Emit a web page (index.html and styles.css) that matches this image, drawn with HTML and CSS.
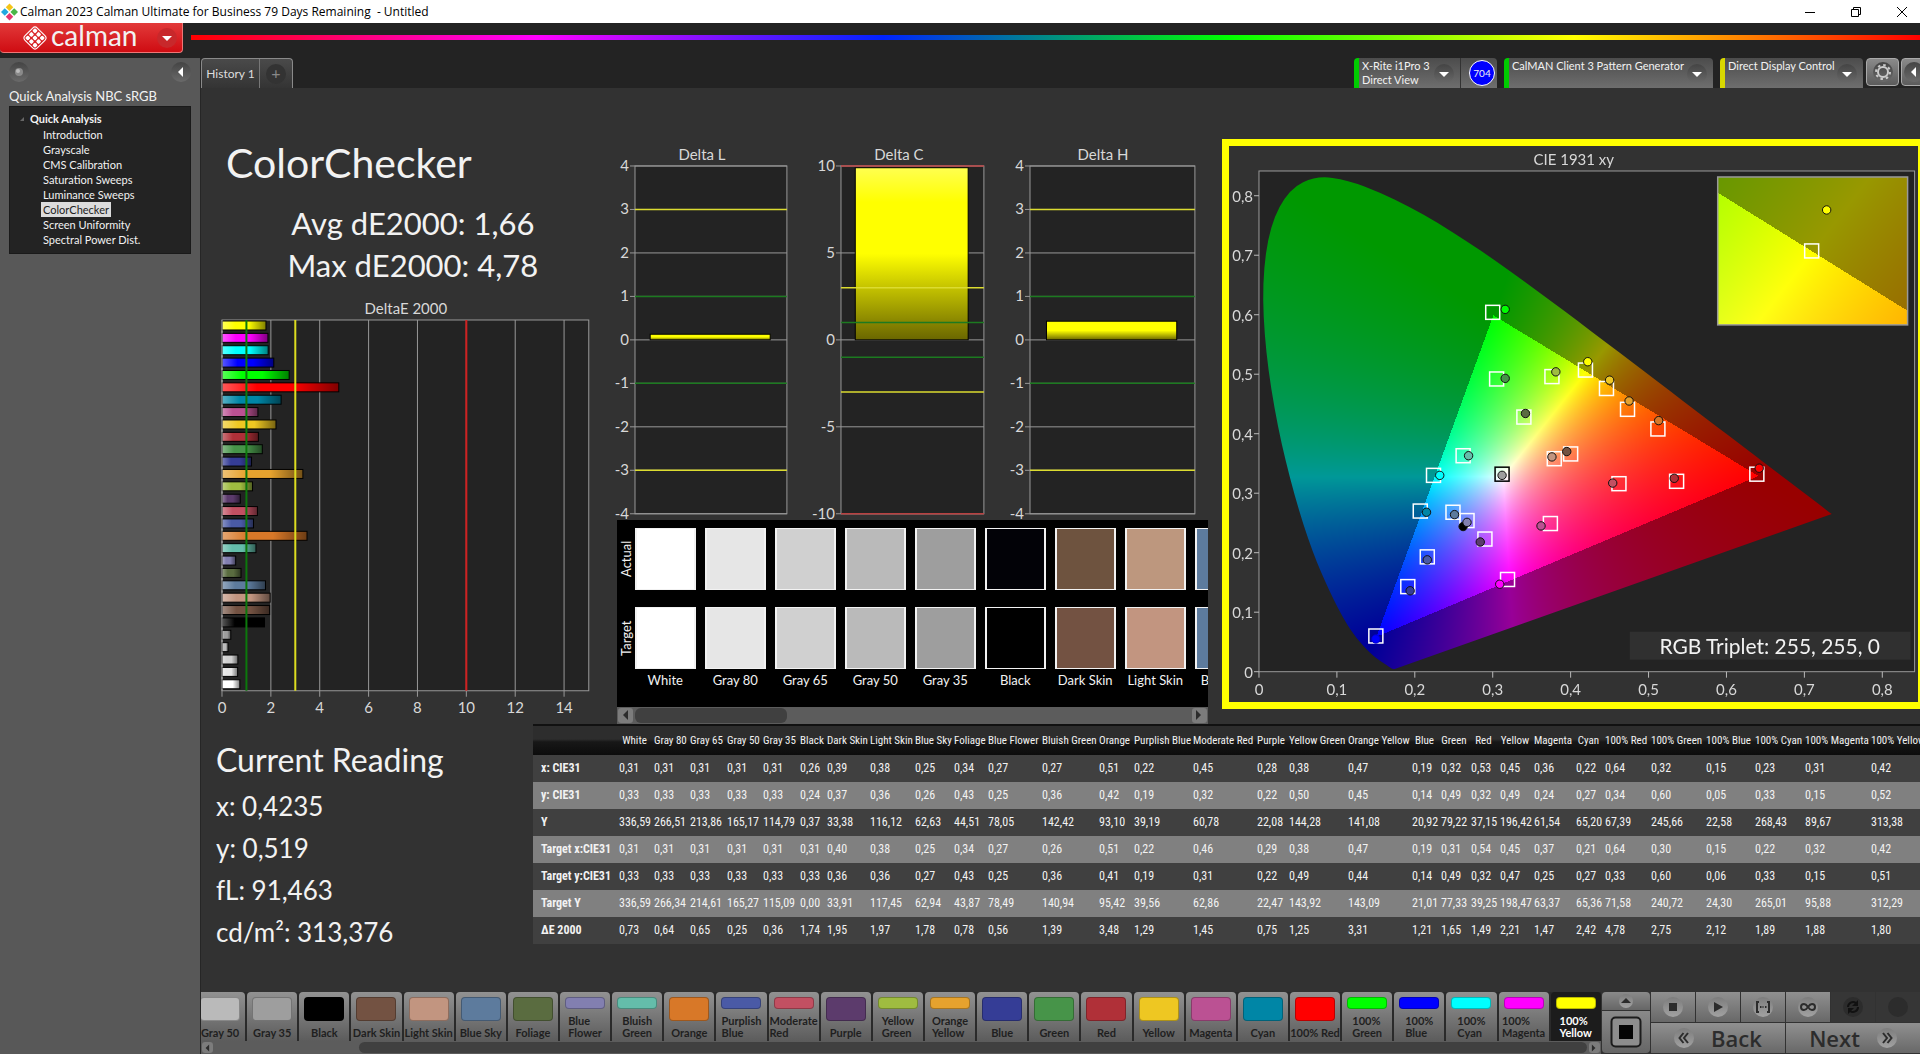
FILE: index.html
```html
<!DOCTYPE html>
<html lang="en">
<head>
<meta charset="utf-8">
<title>Calman 2023 Calman Ultimate for Business 79 Days Remaining - Untitled</title>
<link rel="stylesheet" href="styles.css">
</head>
<body>
<header class="titlebar">
  <svg class="app-icon" viewBox="0 0 18 18" aria-hidden="true">
    <path d="M9 0l4 4-4 4-4-4z" fill="#f5c518"/><path d="M14 5l4 4-4 4-4-4z" fill="#4bb648"/><path d="M9 10l4 4-4 4-4-4z" fill="#e5356f"/><path d="M4 5l4 4-4 4-4-4z" fill="#22a8e0"/>
  </svg>
  <span class="titlebar-text">Calman 2023 Calman Ultimate for Business 79 Days Remaining&nbsp; - Untitled</span>
  <div class="window-controls">
    <button type="button" aria-label="Minimize"><svg viewBox="0 0 12 12"><path d="M1 6.5h10"/></svg></button>
    <button type="button" aria-label="Restore"><svg viewBox="0 0 12 12"><path d="M1.500 3.500h7v7h-7zM3.500 3.500v-2h7v7h-2"/></svg></button>
    <button type="button" aria-label="Close"><svg viewBox="0 0 12 12"><path d="M1 1l10 10M11 1L1 11"/></svg></button>
  </div>
</header>

<div class="brandbar">
  <button type="button" class="brand">
    <svg class="brand-mark" viewBox="0 0 24 24" aria-hidden="true">
      <g transform="rotate(45 12 12)">
        <rect x="4" y="4" width="16" height="16" rx="3" fill="none" stroke="#fff"/>
        <g fill="#fff"><rect x="5.500" y="5.500" width="3.600" height="3.600" rx="1"/><rect x="10.200" y="5.500" width="3.600" height="3.600" rx="1"/><rect x="14.900" y="5.500" width="3.600" height="3.600" rx="1"/><rect x="5.500" y="10.200" width="3.600" height="3.600" rx="1"/><rect x="10.200" y="10.200" width="3.600" height="3.600" rx="1"/><rect x="14.900" y="10.200" width="3.600" height="3.600" rx="1"/><rect x="5.500" y="14.900" width="3.600" height="3.600" rx="1"/><rect x="10.200" y="14.900" width="3.600" height="3.600" rx="1"/><rect x="14.900" y="14.900" width="3.600" height="3.600" rx="1"/></g>
      </g>
    </svg>
    <span class="brand-name">calman</span>
    <span class="brand-arrow"><svg viewBox="0 0 20 20"><path d="M5 8h10l-5 5z"/></svg></span>
  </button>
  <div class="spectrum"></div>
</div>

<div class="workspace">
  <aside class="sidebar">
    <div class="sidebar-tools">
      <button type="button" class="round" aria-label="Pin"><svg viewBox="0 0 20 20"><circle cx="10" cy="10" r="4" fill="#8a8a8a"/><circle cx="9" cy="9" r="2" fill="#bbb"/></svg></button>
      <button type="button" class="round" aria-label="Collapse"><svg viewBox="0 0 20 20"><path d="M12 5v10l-5-5z"/></svg></button>
    </div>
    <h2 class="sidebar-title">Quick Analysis NBC sRGB</h2>
    <nav class="tree">
      <p class="tree-root"><svg viewBox="0 0 8 8" aria-hidden="true"><path d="M6 2v4H2z" fill="#666"/></svg>Quick Analysis</p>
      <ul>
        <li><a href="#">Introduction</a></li>
        <li><a href="#">Grayscale</a></li>
        <li><a href="#">CMS Calibration</a></li>
        <li><a href="#">Saturation Sweeps</a></li>
        <li><a href="#">Luminance Sweeps</a></li>
        <li><a href="#" class="current">ColorChecker</a></li>
        <li><a href="#">Screen Uniformity</a></li>
        <li><a href="#">Spectral Power Dist.</a></li>
      </ul>
    </nav>
  </aside>

  <main class="main">
    <div class="tabbar">
      <div class="history">
        <button type="button" class="history-tab">History 1</button>
        <button type="button" class="history-add" aria-label="Add history"><span>+</span></button>
      </div>
      <div class="devices">
        <div class="device device-meter">
          <button type="button" class="device-main"><span>X-Rite i1Pro 3<br>Direct View</span><span class="round"><svg viewBox="0 0 20 20"><path d="M5 8h10l-5 5z"/></svg></span></button>
          <span class="badge">704</span>
        </div>
        <div class="device device-source">
          <button type="button" class="device-main"><span>CalMAN Client 3 Pattern Generator</span><span class="round"><svg viewBox="0 0 20 20"><path d="M5 8h10l-5 5z"/></svg></span></button>
        </div>
        <div class="device device-display">
          <button type="button" class="device-main"><span>Direct Display Control</span><span class="round"><svg viewBox="0 0 20 20"><path d="M5 8h10l-5 5z"/></svg></span></button>
        </div>
        <div class="device-tools">
          <button type="button" class="tool" aria-label="Settings"><span class="round"><svg viewBox="0 0 20 20"><circle cx="10" cy="10" r="5" fill="none" stroke="#ccc" stroke-width="2"/><circle cx="10" cy="10" r="7" fill="none" stroke="#ccc" stroke-width="2" stroke-dasharray="2.500 3"/></svg></span></button>
          <button type="button" class="tool" aria-label="Hide devices"><span class="round"><svg viewBox="0 0 20 20"><path d="M12 5v10l-5-5z"/></svg></span></button>
        </div>
      </div>
    </div>

    <div class="charts">
      <section class="summary">
        <h1>ColorChecker</h1>
        <p class="stat">Avg dE2000: 1,66</p>
        <p class="stat">Max dE2000: 4,78</p>
        <svg id="delta-e" class="chart" viewBox="0 0 410 425"></svg>
      </section>

      <section class="middle">
        <div class="deltas">
          <svg id="delta-l" class="chart" viewBox="0 0 190 384"></svg>
          <svg id="delta-c" class="chart" viewBox="0 0 200 384"></svg>
          <svg id="delta-h" class="chart" viewBox="0 0 210 384"></svg>
        </div>
        <div class="compare">
          <div class="compare-side"><span>Actual</span><span>Target</span></div>
          <div class="compare-list" id="compare"></div>
        </div>
        <div class="scrollbar">
          <button type="button" aria-label="Scroll left"><svg viewBox="0 0 14 14"><path d="M10 2v10L5 7z"/></svg></button>
          <div class="track"><div class="thumb thumb-short"></div></div>
          <button type="button" aria-label="Scroll right"><svg viewBox="0 0 14 14"><path d="M4 2v10l5-5z"/></svg></button>
        </div>
      </section>

      <section class="cie">
        <div class="cie-panel">
          <canvas id="gamut" width="689" height="556"></canvas>
          <svg id="cie" class="chart" viewBox="0 0 689 556"></svg>
        </div>
      </section>
    </div>

    <div class="readings">
      <section class="current-reading">
        <h2>Current Reading</h2>
        <p>x: 0,4235</p>
        <p>y: 0,519</p>
        <p>fL: 91,463</p>
        <p>cd/m²: 313,376</p>
      </section>
      <div class="table-wrap"><table class="data" id="data"></table></div>
    </div>

    <footer class="bottombar">
      <div class="strip">
        <div class="patches" id="patches"></div>
        <div class="scrollbar scrollbar-small">
          <button type="button" aria-label="Scroll left"><svg viewBox="0 0 14 14"><path d="M10 2v10L5 7z"/></svg></button>
          <div class="track"><div class="thumb thumb-long"></div></div>
          <button type="button" aria-label="Scroll right"><svg viewBox="0 0 14 14"><path d="M4 2v10l5-5z"/></svg></button>
        </div>
      </div>
      <div class="window-toggle">
        <button type="button" class="up" aria-label="Expand"><span class="disc"><svg viewBox="0 0 14 14"><path d="M2 9h10L7 4z"/></svg></span></button>
        <button type="button" class="pattern" aria-label="Pattern window"><svg viewBox="0 0 32 32"><rect x="1.500" y="1.500" width="29" height="29" rx="4" fill="#8d8d8d" stroke="#1c1c1c" stroke-width="2"/><path d="M9 9h14v14H9z" fill="#050505"/></svg></button>
      </div>
      <div class="transport">
        <div class="transport-row">
          <button type="button" aria-label="Stop"><span class="disc"><svg viewBox="0 0 20 20"><path d="M6 6h8v8H6z"/></svg></span></button>
          <button type="button" aria-label="Read"><span class="disc"><svg viewBox="0 0 20 20"><path d="M6 5l9 5-9 5z"/></svg></span></button>
          <button type="button" aria-label="Read series"><span class="disc"><svg viewBox="0 0 20 20"><path d="M6 5H4v10h2M14 5h2v10h-2M7 10h1.500M9.500 10h1M12 10h1.500" fill="none" stroke="#2c2c2c" stroke-width="2"/></svg></span></button>
          <button type="button" aria-label="Read continuous"><span class="disc"><svg viewBox="0 0 20 20"><path d="M10 10c-2-3-3-3-4-3a3 3 0 0 0 0 6c1 0 2 0 4-3s3-3 4-3a3 3 0 0 1 0 6c-1 0-2 0-4-3z" fill="none" stroke="#2c2c2c" stroke-width="2"/></svg></span></button>
          <button type="button" class="off" aria-label="Refresh"><span class="disc"><svg viewBox="0 0 20 20"><path d="M5 10a5 5 0 0 1 8-4M15 10a5 5 0 0 1-8 4" fill="none" stroke="#111" stroke-width="2"/><path d="M15 3v6H9zM5 17v-6h6z" fill="#111"/></svg></span></button>
          <button type="button" class="off" aria-label="Record"><span class="disc"></span></button>
        </div>
        <div class="transport-nav">
          <button type="button"><span class="disc"><svg viewBox="0 0 20 20"><path d="M9.500 5l-4 5 4 5M14 5l-4 5 4 5" fill="none" stroke="#2c2c2c" stroke-width="2"/></svg></span>Back</button>
          <button type="button">Next<span class="disc"><svg viewBox="0 0 20 20"><path d="M6 5l4 5-4 5M10.500 5l4 5-4 5" fill="none" stroke="#2c2c2c" stroke-width="2"/></svg></span></button>
        </div>
      </div>
    </footer>
  </main>
</div>
<script src="app.js"></script>
</body>
</html>
```
FILE: styles.css
```css
* { box-sizing: border-box; }
body {
  margin: 0;
  min-height: 100vh;
  display: flex;
  flex-direction: column;
  background: #323232;
  color: #f2f2f2;
  font-family: Lato, "Liberation Sans", sans-serif;
  overflow-x: hidden;
}
h1, h2, p, ul { margin: 0; padding: 0; font-weight: 400; }
button { border: 0; padding: 0; background: none; color: inherit; font: inherit; }
svg { display: block; }

/* Window title */
.titlebar {
  display: flex;
  align-items: center;
  height: 23px;
  padding-left: 1px;
  background: #fff;
  color: #000;
  font: 12px "Open Sans", sans-serif;
}
.app-icon { width: 17px; height: 18px; margin-right: 2px; }
.titlebar-text { flex: 1; }
.window-controls { display: flex; margin-right: -5px; }
.window-controls button { width: 46px; display: grid; place-items: center; }
.window-controls svg { width: 12px; height: 12px; fill: none; stroke: #000; }

/* Brand row */
.brandbar {
  display: flex;
  gap: 8px;
  height: 35px;
  background: #232323;
}
.brand {
  display: flex;
  align-items: center;
  width: 183px;
  height: 30px;
  padding: 0 5px 0 22px;
  border: 1px solid #e77;
  border-top: 0;
  border-left: 0;
  border-radius: 0 0 4px 4px;
  background: linear-gradient(#e23a3a, #cf0c12);
}
.brand-mark { width: 26px; height: 26px; margin-right: 3px; }
.brand-name { flex: 1; font-size: 28px; line-height: 28px; text-align: left; padding-bottom: 6px; }
.brand-arrow { width: 20px; height: 20px; border-radius: 50%; background: #c8282b; }
.brand-arrow svg, .round svg { width: 20px; height: 20px; fill: #fff; }
.spectrum {
  flex: 1;
  height: 5px;
  margin-top: 12px;
  background: linear-gradient(90deg, #f00, #f0f 20%, #02f 40%, #0f0 60%, #ff0 80%, #f00);
}

/* Sidebar */
.workspace { flex: 1; display: flex; }
.sidebar {
  width: 201px;
  padding: 4px 9px;
  background: #585858;
  border-right: 1px solid #262626;
}
.sidebar-tools { display: flex; justify-content: space-between; }
.round {
  flex: none;
  width: 20px;
  height: 20px;
  border-radius: 50%;
  background: linear-gradient(#444, #6a6a6a);
}
.sidebar-title { margin-top: 5px; font-size: 13px; line-height: 19px; }
.tree {
  height: 148px;
  padding-top: 3px;
  background: #232323;
  border: 1px solid #1a1a1a;
  font-size: 11px;
  line-height: 15px;
}
.tree-root { display: flex; align-items: center; gap: 4px; height: 17px; padding-left: 8px; font-weight: 700; }
.tree-root svg { width: 8px; height: 8px; }
.tree ul { list-style: none; padding-left: 31px; }
.tree a { display: inline-block; padding: 0 2px; color: #f2f2f2; text-decoration: none; }
.tree .current { background: #dcdcdc; color: #222; }

/* Tabs and devices */
.main { flex: 1; min-width: 0; display: flex; flex-direction: column; overflow: hidden; }
.tabbar { display: flex; justify-content: space-between; height: 30px; background: #232323; }
.history {
  display: flex;
  border: 1px solid #8a8a8a;
  border-bottom: 0;
  border-radius: 4px 4px 0 0;
  background: linear-gradient(#4a4a4a, #343434);
}
.history-tab { width: 58px; font-size: 12px; color: #ddd; border-right: 1px solid #777; }
.history-add { width: 32px; display: grid; place-items: center; color: #888; }
.history-add span { width: 20px; height: 20px; line-height: 18px; border-radius: 50%; background: #333; }
.devices { display: flex; gap: 7px; margin-right: -7px; }
.device {
  display: flex;
  align-items: center;
  border-left: 5px solid #0c0;
  border-radius: 4px 4px 0 0;
  background: linear-gradient(#4c4c4c, #6e6e6e);
}
.device-main {
  flex: 1;
  display: flex;
  justify-content: space-between;
  align-items: flex-start;
  height: 30px;
  padding: 1px 6px 0 3px;
  font-size: 11px;
  line-height: 14px;
  text-align: left;
  white-space: nowrap;
}
.device-main .round { margin-top: 5px; }
.device-meter { width: 143px; }
.device-source { width: 209px; }
.device-display { width: 143px; border-left-color: #d8d800; }
.device-meter .device-main { border-right: 1px solid #333; }
.badge {
  width: 26px;
  height: 26px;
  margin: 0 2px 0 8px;
  border: 1px solid #fff;
  border-radius: 50%;
  background: #00f;
  font-size: 10px;
  line-height: 24px;
  text-align: center;
}
.device-tools { display: flex; gap: 2px; margin-left: -4px; }
.tool {
  display: grid;
  place-items: center;
  width: 33px;
  height: 28px;
  border: 1px solid #aaa;
  border-radius: 4px;
  background: linear-gradient(#8a8a8a, #5c5c5c);
}
.tool + .tool { width: 26px; }

/* Charts */
.charts { display: grid; grid-template-columns: minmax(0, 410fr) minmax(0, 600fr) minmax(0, 710fr); }
.chart { width: 100%; height: auto; overflow: visible; font-family: Lato, sans-serif; }
.chart text { fill: #d8d8d8; font-size: 15px; }
.chart .triplet { fill: #f2f2f2; font-size: 21px; }
.summary { padding-top: 45px; }
.summary h1 { padding-left: 25px; font-size: 41px; line-height: 60px; }
.stat { padding-left: 14px; font-size: 31px; line-height: 42px; text-align: center; white-space: nowrap; }
.summary h1 + .stat { margin-top: 9px; }
.summary .chart { margin-top: 10px; }
.middle { padding-top: 48px; }
.deltas { display: grid; grid-template-columns: minmax(0, 190fr) minmax(0, 200fr) minmax(0, 210fr); }
.compare {
  display: flex;
  height: 187px;
  margin: 0 2px 0 6px;
  padding-top: 8px;
  background: #000;
  overflow: hidden;
}
.compare-side { flex: none; width: 18px; display: flex; flex-direction: column; gap: 17px; font-size: 13px; }
.compare-side span { height: 62px; line-height: 18px; writing-mode: vertical-rl; transform: rotate(180deg); text-align: center; }
.compare-list { display: flex; gap: 9px; flex: 1; min-width: 0; overflow: hidden; }
.compare-item { flex: none; width: 61px; font-size: 13px; line-height: 20px; text-align: center; white-space: nowrap; }
.compare-item div { height: 62px; margin-bottom: 17px; border: 2px solid #f2f2f2; border-width: 1px 2px; }
.compare-item div + div { margin-bottom: 1px; }
.scrollbar { display: flex; height: 17px; margin: 0 2px 0 6px; padding: 1px; background: #5c5c5c; }
.scrollbar button { width: 15px; border-radius: 3px; background: #7c7c7c; }
.scrollbar svg { width: 14px; height: 14px; fill: #2c2c2c; }
.track { flex: 1; padding: 0 2px; }
.thumb { height: 100%; border-radius: 6px; background: #404040; }
.thumb-short { width: 152px; }
.thumb-long { margin-left: 144px; }
.scrollbar-small { height: 13px; margin: 0; }
.scrollbar-small button { width: 11px; }
.scrollbar-small svg { width: 10px; height: 10px; }

.cie { padding: 51px 0 0 12px; }
.cie-panel { display: grid; border: 7px solid #ff0; border-right-width: 2px; }
.cie-panel > * { grid-area: 1 / 1; width: 100%; height: auto; }

/* Readings */
.readings { display: flex; }
.current-reading { flex: none; width: 332px; padding: 13px 0 0 15px; font-size: 26px; line-height: 42px; }
.current-reading h2 { font-size: 32px; line-height: 46px; margin-bottom: 2px; }
.table-wrap { flex: 1; min-width: 0; overflow: hidden; border-top: 2px solid #111; }
.data {
  table-layout: fixed;
  width: 1400px;
  border-collapse: collapse;
  font-family: "Roboto Condensed", "Liberation Sans", sans-serif;
  font-size: 12px;
  white-space: nowrap;
}
.data th, .data td { padding: 0; text-align: left; font-weight: 400; }
.data thead tr { height: 29px; background: linear-gradient(#2d2d2d 45%, #171717 55%, #0c0c0c); }
.data thead th { padding-right: 4px; text-align: center; font-size: 11px; }
.data tbody tr { height: 27px; background: #404040; }
.data tbody tr:nth-child(even) { background: #808080; }
.data tbody th { padding-left: 8px; font-weight: 700; }

/* Bottom bar */
.bottombar { display: flex; height: 62px; margin-top: auto; }
.strip { flex: 1; min-width: 0; overflow: hidden; }
.patches { display: flex; gap: 2px; margin-left: -6px; height: 49px; background: #2a2a2a; }
.patch {
  flex: 1 1 0;
  min-width: 0;
  display: flex;
  flex-direction: column;
  align-items: center;
  justify-content: space-between;
  padding: 5px 0 2px;
  border-radius: 4px 4px 0 0;
  background: linear-gradient(#929292, #5c5c5c);
  color: #1f1f1f;
  font-size: 11px;
  font-weight: 700;
  line-height: 12px;
  text-align: left;
  white-space: nowrap;
}
.patch i { width: 40px; height: 24px; border: 1px solid #0004; border-radius: 4px; }
.patch .half { height: 12px; }
.patch.selected { background: #1c1c1c; color: #fff; }
.window-toggle { width: 48px; margin: 0 1px; display: flex; flex-direction: column; gap: 1px; }
.window-toggle button { display: grid; place-items: center; background: linear-gradient(#8a8a8a, #666); border-radius: 4px 4px 0 0; }
.window-toggle .up { height: 18px; }
.window-toggle .pattern { height: 42px; border-radius: 0 0 4px 4px; }
.pattern svg { width: 32px; height: 32px; }
.disc { display: block; width: 20px; height: 20px; border-radius: 50%; background: linear-gradient(#7c7c7c, #a2a2a2); }
.disc svg { width: 20px; height: 20px; fill: #2c2c2c; }
.up .disc { width: 14px; height: 14px; }
.up .disc svg { width: 14px; height: 14px; }
.transport { width: 269px; display: grid; grid-template-rows: 30px 30px; gap: 1px; }
.transport-row { display: grid; grid-template-columns: repeat(6, 1fr); gap: 1px; }
.transport-row button, .transport-nav button { background: linear-gradient(#909090, #686868); }
.transport-row button { display: grid; place-items: center; }
.transport-row .off { background: #363636; }
.off .disc { background: #2c2c2c; }
.transport-nav { display: grid; grid-template-columns: 1fr 1fr; gap: 1px; }
.transport-nav button {
  display: flex;
  align-items: center;
  justify-content: center;
  gap: 17px;
  color: #2c2c2c;
  font: 600 22px "Open Sans", sans-serif;
}
```
FILE: app.js
```js
const names = ['White', 'Gray 80', 'Gray 65', 'Gray 50', 'Gray 35', 'Black', 'Dark Skin', 'Light Skin', 'Blue Sky', 'Foliage', 'Blue Flower', 'Bluish Green', 'Orange', 'Purplish Blue', 'Moderate Red', 'Purple', 'Yellow Green', 'Orange Yellow', 'Blue', 'Green', 'Red', 'Yellow', 'Magenta', 'Cyan', '100% Red', '100% Green', '100% Blue', '100% Cyan', '100% Magenta', '100% Yellow'];
const colors = ['#ffffff', '#e6e6e6', '#d0d0d0', '#bababa', '#9e9e9e', '#000000', '#735242', '#c29580', '#5d7b9d', '#5a6c40', '#827fb0', '#64bdaa', '#d87828', '#4a5aa6', '#c25062', '#5c3b6c', '#9fbc40', '#e6a22e', '#353d96', '#479449', '#b03038', '#eec722', '#bb5193', '#0086a6', '#ff0000', '#00ff00', '#0000ff', '#00ffff', '#ff00ff', '#ffff00'];
const rows = [
  ['x: CIE31', '0,31 0,31 0,31 0,31 0,31 0,26 0,39 0,38 0,25 0,34 0,27 0,27 0,51 0,22 0,45 0,28 0,38 0,47 0,19 0,32 0,53 0,45 0,36 0,22 0,64 0,32 0,15 0,23 0,31 0,42'],
  ['y: CIE31', '0,33 0,33 0,33 0,33 0,33 0,24 0,37 0,36 0,26 0,43 0,25 0,36 0,42 0,19 0,32 0,22 0,50 0,45 0,14 0,49 0,32 0,49 0,24 0,27 0,34 0,60 0,05 0,33 0,15 0,52'],
  ['Y', '336,59 266,51 213,86 165,17 114,79 0,37 33,38 116,12 62,63 44,51 78,05 142,42 93,10 39,19 60,78 22,08 144,28 141,08 20,92 79,22 37,15 196,42 61,54 65,20 67,39 245,66 22,58 268,43 89,67 313,38'],
  ['Target x:CIE31', '0,31 0,31 0,31 0,31 0,31 0,31 0,40 0,38 0,25 0,34 0,27 0,26 0,51 0,22 0,46 0,29 0,38 0,47 0,19 0,31 0,54 0,45 0,37 0,21 0,64 0,30 0,15 0,22 0,32 0,42'],
  ['Target y:CIE31', '0,33 0,33 0,33 0,33 0,33 0,33 0,36 0,36 0,27 0,43 0,25 0,36 0,41 0,19 0,31 0,22 0,49 0,44 0,14 0,49 0,32 0,47 0,25 0,27 0,33 0,60 0,06 0,33 0,15 0,51'],
  ['Target Y', '336,59 266,34 214,61 165,27 115,09 0,00 33,91 117,45 62,94 43,87 78,49 140,94 95,42 39,56 62,86 22,47 143,92 143,09 21,01 77,33 39,25 198,47 63,37 65,36 71,58 240,72 24,30 265,01 95,88 312,29'],
  ['ΔE 2000', '0,73 0,64 0,65 0,25 0,36 1,74 1,95 1,97 1,78 0,78 0,56 1,39 3,48 1,29 1,45 0,75 1,25 3,31 1,21 1,65 1,49 2,21 1,47 2,42 4,78 2,75 2,12 1,89 1,88 1,80']
];
const colWidths = [86, 35, 36, 37, 36, 37, 27, 43, 45, 39, 34, 54, 57, 35, 59, 64, 32, 59, 64, 29, 30, 29, 34, 42, 29, 46, 55, 49, 50, 66, 55, 12];
const byId = id => document.getElementById(id);
const rect = (x, y, w, h, fill, extra = '') => `<rect x="${x}" y="${y}" width="${w}" height="${h}" fill="${fill}" ${extra}/>`;
const line = (x1, y1, x2, y2, color, w = 1) => `<path d="M${x1} ${y1}L${x2} ${y2}" stroke="${color}" stroke-width="${w}"/>`;
const text = (x, y, s, anchor = 'middle', cls = '') => `<text x="${x}" y="${y}" text-anchor="${anchor}" class="${cls}">${s}</text>`;

/* Measurement table */
byId('data').innerHTML =
  '<colgroup>' + colWidths.map(w => `<col style="width:${w}px">`).join('') + '</colgroup>' +
  '<thead><tr><td></td>' + names.map(n => `<th scope="col">${n}</th>`).join('') + '<td></td></tr></thead><tbody>' +
  rows.map(([label, values]) => `<tr><th scope="row">${label}</th>` + values.split(' ').map(v => `<td>${v}</td>`).join('') + '<td></td></tr>').join('') + '</tbody>';

/* Actual and target swatches */
const measured = { 5: '#020207', 6: '#6e533f', 7: '#bd977e' };
byId('compare').innerHTML = names.slice(0, 9).map((n, i) =>
  `<div class="compare-item"><div style="background:${measured[i] || colors[i]}"></div><div style="background:${colors[i]}"></div>${n}</div>`).join('');

/* Pattern strip */
const wrapped = new Set([10, 11, 13, 14, 16, 17, 25, 26, 27, 28, 29]);
byId('patches').innerHTML = names.slice(3).map((n, k) => {
  const i = k + 3, two = wrapped.has(i);
  return `<button type="button" class="patch${i === 29 ? ' selected' : ''}"><i class="${two ? 'half' : ''}" style="background:${colors[i]}"></i><span>${two ? n.replace(' ', '<br>') : n}</span></button>`;
}).join('');

/* Delta E bars */
(() => {
  const x0 = 21, y0 = 24, x1 = 388, y1 = 395, unit = 24.45, pitch = 12.38;
  let s = '<defs><linearGradient id="sheen"><stop offset="0" stop-color="#fff" stop-opacity=".35"/><stop offset=".3" stop-color="#fff" stop-opacity="0"/><stop offset=".6" stop-color="#000" stop-opacity="0"/><stop offset="1" stop-color="#000" stop-opacity=".5"/></linearGradient></defs>';
  s += text(205, 18, 'DeltaE 2000') + rect(x0, y0, x1 - x0, y1 - y0, '#232323', 'stroke="#999"');
  for (let v = 0; v < 15; v += 2) {
    const x = x0 + v * unit;
    s += line(x, y0, x, y1 + 6, '#999') + text(x, y1 + 22, v);
  }
  rows[6][1].split(' ').reverse().forEach((v, k) => {
    const w = parseFloat(v.replace(',', '.')) * unit, y = y0 + 1 + k * pitch, c = colors[29 - k];
    s += rect(x0, y, w, 9, c) + rect(x0, y, w, 9, 'url(#sheen)', 'stroke="#000"');
  });
  s += line(x0 + unit, y0, x0 + unit, y1, '#0c780c', 2) + line(x0 + 3 * unit, y0, x0 + 3 * unit, y1, '#dcdc20', 2) + line(x0 + 10 * unit, y0, x0 + 10 * unit, y1, '#d02020', 2) + line(x0, y0, x0, y1, '#999');
  byId('delta-e').innerHTML = s;
})();

/* Delta L, C and H */
function delta(id, title, titleX, x0, x1, max, step, value) {
  const top = 30, bottom = 378, zero = 204, unit = 174 / max, w = x1 - x0;
  const limit = (v, c) => [v, -v].map(n => line(x0, zero - n * unit, x1, zero - n * unit, c, 1.5)).join('');
  let s = `<defs><linearGradient id="${id}-fill" x2="0" y2="1"><stop offset="0" stop-color="${max > 4 ? '#ffff50' : '#ffff00'}"/><stop offset=".2" stop-color="#ff0"/><stop offset=".5" stop-color="#ff0"/><stop offset="1" stop-color="#6a6600"/></linearGradient></defs>`;
  s += text(titleX, 24, title) + rect(x0, top, w, bottom - top, '#232323', 'stroke="#999"');
  for (let v = -max; v <= max; v += step) {
    const y = zero - v * unit;
    s += line(x0 - 5, y, x1, y, '#999') + text(x0 - 6, y + 5, v, 'end');
  }
  s += rect(x0 + w * .1, zero - value * unit, w * .79, value * unit, `url(#${id}-fill)`, 'stroke="#000"');
  s += limit(1, '#1c7a20') + limit(3, '#dcdc30');
  if (max > 4) s += limit(10, '#b84040');
  byId(id).innerHTML = s;
}
delta('delta-l', 'Delta L', 91, 24, 176, 4, 1, .13);
delta('delta-c', 'Delta C', 98, 40, 183, 10, 5, 9.9);
delta('delta-h', 'Delta H', 102, 29, 194, 4, 1, .43);

/* CIE diagram */
const X0 = 30, Y0 = 526, SX = 779.6, SY = 595.3;
const px = (x, y) => [X0 + x * SX, Y0 - y * SY];
const locus = [[.1741,.005],[.1714,.0051],[.1689,.0069],[.1644,.0109],[.1566,.0177],[.144,.0297],[.1241,.0578],[.1096,.0868],[.0913,.1327],[.0687,.2007],[.0454,.295],[.0235,.4127],[.0082,.5384],[.0039,.6548],[.0139,.7502],[.0389,.812],[.0743,.8338],[.1142,.8262],[.1547,.8059],[.1929,.7816],[.2296,.7543],[.2658,.7243],[.3016,.6923],[.3373,.6589],[.3731,.6245],[.4087,.5896],[.4441,.5547],[.4788,.5202],[.5125,.4866],[.5752,.4242],[.627,.3725],[.6658,.334],[.6915,.3083],[.719,.2809],[.7347,.2653]];
const tri = [[.64, .33], [.3, .6], [.15, .06]];
const inTriangle = (x, y) => tri.every(([ax, ay], i) => {
  const [bx, by] = tri[(i + 1) % 3];
  return (bx - ax) * (y - ay) - (by - ay) * (x - ax) >= 0;
});
function chroma(x, y) {
  const X = x / y, Z = (1 - x - y) / y;
  const c = [3.2406 * X - 1.5372 - .4986 * Z, -.9689 * X + 1.8758 + .0415 * Z, .0557 * X - .204 + 1.057 * Z].map(v => Math.max(0, v));
  const m = Math.max(...c), level = inTriangle(x, y) ? 255 : 152;
  return c.map(v => v / m * level);
}
(() => {
  const W = 689, H = 556, layer = () => Object.assign(document.createElement('canvas'), { width: W, height: H });
  const paint = toXY => {
    const cv = layer(), g = cv.getContext('2d'), img = g.createImageData(W, H);
    for (let j = 0; j < H; j++) for (let i = 0; i < W; i++) {
      const [x, y] = toXY(i, j), k = (j * W + i) * 4;
      if (y <= 0.001) continue;
      const c = chroma(x, y);
      img.data.set([c[0], c[1], c[2], 255], k);
    }
    g.putImageData(img, 0, 0);
    return cv;
  };
  const ctx = byId('gamut').getContext('2d');
  ctx.fillStyle = '#232323';
  ctx.fillRect(30, 25, 656, 501);
  ctx.save();
  ctx.beginPath();
  ctx.moveTo(...px(...locus[0]));
  locus.slice(1).forEach((p, i) => {
    const q = locus[i + 2] || p, a = px(...p), b = px(...q);
    ctx.quadraticCurveTo(...a, (a[0] + b[0]) / 2, (a[1] + b[1]) / 2);
  });
  ctx.closePath();
  ctx.clip();
  ctx.drawImage(paint((i, j) => [(i - X0) / SX, (Y0 - j) / SY]), 0, 0);
  ctx.restore();
  ctx.save();
  ctx.beginPath();
  ctx.rect(489, 31, 190, 148);
  ctx.clip();
  ctx.drawImage(paint((i, j) => [.4193 + (i - 583) / 3700, .5053 + (105 - j) / 2900]), 0, 0);
  ctx.restore();
})();
const targets = [[.3,.604],[.305,.492],[.376,.496],[.419,.507],[.446,.476],[.473,.441],[.512,.408],[.34,.428],[.262,.363],[.224,.33],[.379,.358],[.4,.366],[.462,.316],[.536,.32],[.639,.332],[.207,.27],[.249,.268],[.267,.254],[.29,.223],[.374,.249],[.216,.193],[.191,.143],[.319,.155],[.15,.06]];
const actual = [[.262,.244,5],[.316,.493,19],[.381,.504,16],[.422,.521,29],[.45,.49,21],[.475,.455,17],[.513,.422,12],[.342,.434,9],[.269,.363,11],[.232,.33,27],[.312,.33,4],[.376,.361,7],[.395,.37,6],[.454,.317,14],[.533,.325,20],[.642,.342,24],[.215,.268,23],[.251,.264,8],[.267,.251,10],[.284,.218,15],[.362,.245,22],[.216,.188,13],[.194,.136,18],[.309,.147,28],[.15,.055,26],[.316,.609,25]];
(() => {
  const box = ([cx, cy], c = '#fff') => rect(cx - 7, cy - 7, 14, 14, 'none', `stroke="${c}" stroke-width="1.500"`);
  const dot = ([cx, cy], c, stroke = '#111') => `<circle cx="${cx}" cy="${cy}" r="4.200" fill="${c}" stroke="${stroke}"/>`;
  let s = text(345, 19, 'CIE 1931 xy') + rect(30, 25, 656, 501, 'none', 'stroke="#999"');
  for (let i = 0; i < 9; i++) {
    const label = i ? '0,' + i : '0', [x] = px(i / 10, 0), [, y] = px(0, i / 10);
    s += line(x, 526, x, 532, '#bbb') + text(x, 549, label) + line(25, y, 30, y, '#bbb') + text(24, y + 6, label, 'end');
  }
  s += targets.map(t => box(px(...t))).join('') + box(px(.312, .332), '#000') + rect(px(.312, .332)[0] - 5, px(.312, .332)[1] - 5, 10, 10, 'none', 'stroke="#fff"');
  s += actual.map(([x, y, c]) => dot(px(x, y), colors[c], c === 26 ? '#00c' : '#111')).join('');
  s += rect(489, 31, 190, 148, 'none', 'stroke="#999" stroke-width="1.500"') + box([583, 105]) + dot([598, 64], '#ff0');
  s += rect(401, 486, 281, 28, '#303030') + text(541, 508, 'RGB Triplet: 255, 255, 0', 'middle', 'triplet');
  byId('cie').innerHTML = s;
})();
```
